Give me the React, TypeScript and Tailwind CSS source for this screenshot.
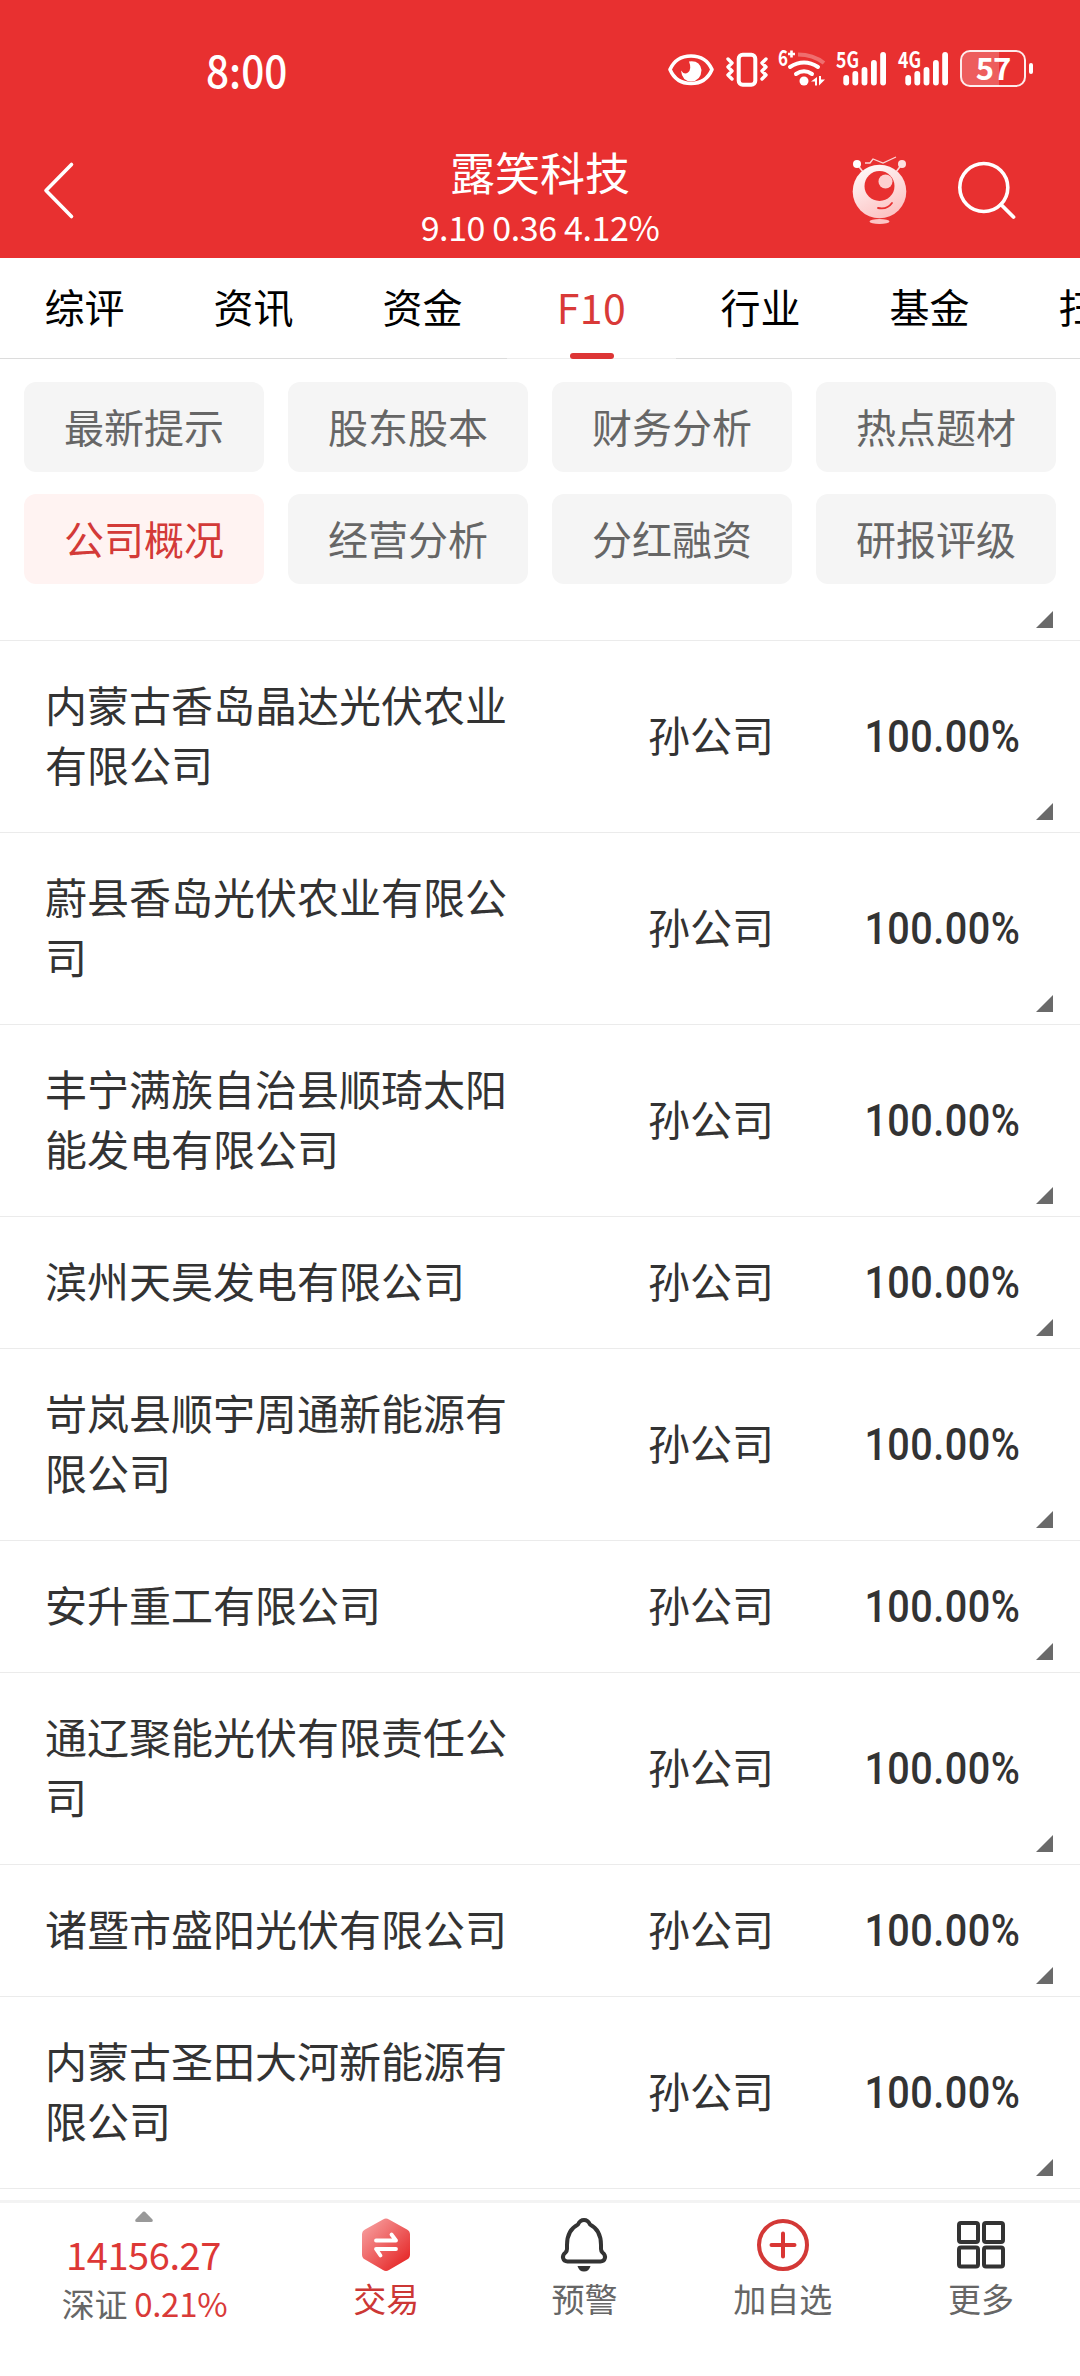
import type { ReactNode } from "react";

const tabs = ["综评", "资讯", "资金", "F10", "行业", "基金", "扫雷"];

const sections = [
  "最新提示",
  "股东股本",
  "财务分析",
  "热点题材",
  "公司概况",
  "经营分析",
  "分红融资",
  "研报评级",
];

const companies = [
  "内蒙古香岛晶达光伏农业有限公司",
  "蔚县香岛光伏农业有限公司",
  "丰宁满族自治县顺琦太阳能发电有限公司",
  "滨州天昊发电有限公司",
  "岢岚县顺宇周通新能源有限公司",
  "安升重工有限公司",
  "通辽聚能光伏有限责任公司",
  "诸暨市盛阳光伏有限公司",
  "内蒙古圣田大河新能源有限公司",
];

// Signal bars with the network type above them
function Signal({ label }: { label: string }) {
  return (
    <svg
      className="overflow-visible"
      width="52"
      height="40"
      viewBox="0 0 52 40"
      fill="white"
    >
      <text
        x="0"
        y="17.600"
        fontSize="22"
        fontWeight="700"
        textLength="23"
        lengthAdjust="spacingAndGlyphs"
      >
        {label}
      </text>
      <rect x="7.3" y="25" width="5.8" height="10.5" rx="2.9" />
      <rect x="16.4" y="21" width="5.8" height="14.5" rx="2.9" />
      <rect x="25.6" y="17" width="5.8" height="18.5" rx="2.9" />
      <rect x="35" y="10" width="5.8" height="25.5" rx="2.9" />
      <rect x="44.2" y="2" width="5.8" height="33.5" rx="2.9" />
    </svg>
  );
}

function StatusBar() {
  return (
    <div className="flex h-[136px] items-start pl-[206px] pr-[47px] pt-[50px]">
      <span className="-mt-px w-[90px] origin-left scale-x-[0.920] text-[44px] font-medium leading-[40px]">
        8:00
      </span>
      <svg
        className="ml-auto overflow-visible"
        width="160"
        height="40"
        viewBox="668 50 160 40"
        fill="none"
        stroke="white"
      >
        {/* eye */}
        <path
          d="M670 69.500Q676 56 691 56T712 69.500Q706 83.500 691 83.500T670 69.500Z"
          strokeWidth="3.600"
          strokeLinejoin="round"
        />
        <path
          d="M689 61.500Q700 60 701.500 70Q701 81 691 81.500Q682 81 681 70.500Q684 75 688 72.500Q692 69 689 61.500Z"
          fill="white"
          stroke="none"
        />
        {/* vibrate */}
        <rect x="738.700" y="54.700" width="16.600" height="30" rx="4" strokeWidth="4" />
        <path
          d="M728 59l4 4-4 4 4 4-4 4 4 4M766 59l-4 4 4 4-4 4 4 4-4 4"
          strokeWidth="3.400"
          strokeLinecap="round"
          strokeLinejoin="round"
        />
        {/* wifi */}
        <text
          x="778"
          y="66.300"
          fontSize="22"
          fontWeight="700"
          fill="white"
          stroke="none"
          textLength="10"
          lengthAdjust="spacingAndGlyphs"
        >
          6
        </text>
        <path d="M788 54h7M791.500 50.500v7" strokeWidth="2.600" />
        <path d="M798 54.500q15 0 26 8.500" strokeWidth="4" opacity=".3" />
        <path d="M790 67q14-9 28 0M796 74q8-5.500 16 0" strokeWidth="4" strokeLinecap="round" />
        <circle cx="804" cy="81" r="4.500" fill="white" stroke="none" />
        <path d="M811 81.500l6-4.500v8.500h-2v-4zM825 79.500l-6 6V76h2v3.500z" fill="white" stroke="none" />
      </svg>
      <div className="ml-2 flex gap-2.5">
        <Signal label="5G" />
        <Signal label="4G" />
      </div>
      <div className="ml-2.5 flex items-center">
        <div className="flex h-[37px] w-[66px] items-center justify-center rounded-[10px] border-[2.500px] border-white/90 bg-[linear-gradient(90deg,rgba(255,255,255,0.22)_60%,transparent_60%)] pb-[3px] text-[31px] font-bold leading-[30px] tracking-[-1px]">
          57
        </div>
        <div className="ml-[3px] h-[11px] w-1 rounded-full bg-white" />
      </div>
    </div>
  );
}

function Mascot() {
  return (
    <svg className="shrink-0" width="56" height="70" viewBox="852 156 56 70" fill="none">
      <defs>
        <linearGradient id="body" x1="0" y1="0" x2="0.500" y2="1">
          <stop offset="0" stopColor="#fff" />
          <stop offset="1" stopColor="#fcc5c5" />
        </linearGradient>
      </defs>
      <path d="M857 164l6 8M902 164l-6 8" stroke="#fbd5d5" strokeWidth="1.600" />
      <circle cx="857" cy="164" r="4" fill="#fff" />
      <circle cx="902" cy="164" r="4" fill="#fde0e0" />
      <path d="M865 163h5l3-4 10 4 13-6" stroke="#fbd5d5" strokeWidth="1.300" />
      <circle cx="879.500" cy="191.500" r="26.800" fill="url(#body)" />
      <circle cx="879.500" cy="186" r="15" fill="#e83030" />
      <circle cx="885.500" cy="181.500" r="7" fill="#fdd0d0" />
      <path d="M878 208q9 2 14-5" stroke="#e83030" strokeWidth="1.800" strokeLinecap="round" />
      <ellipse cx="879.500" cy="221.500" rx="10" ry="2.500" fill="#fcc5c5" />
    </svg>
  );
}

function Header() {
  return (
    <header className="h-[258px] shrink-0 bg-[#e83030] text-white">
      <StatusBar />
      <div className="flex h-[122px] items-start px-[42px]">
        <div className="w-[186px] shrink-0 pt-6">
          <svg width="34" height="60" viewBox="42 160 34 60" fill="none">
            <path
              d="M71.500 164.500L46 190.500L71.500 216.500"
              stroke="white"
              strokeWidth="3.600"
              strokeLinecap="round"
              strokeLinejoin="round"
            />
          </svg>
        </div>
        <div className="flex flex-1 flex-col items-center">
          <h1 className="mt-1.5 text-[45px] leading-[60px]">露笑科技</h1>
          <p className="mt-[5px] whitespace-nowrap text-[34px] leading-[40px] tracking-[-0.400px]">
            9.10 0.36 4.12%
          </p>
        </div>
        <div className="flex w-[186px] shrink-0 justify-end gap-[48px] pt-5 pr-[22px]">
          <Mascot />
          <svg
            className="mt-1 shrink-0"
            width="60"
            height="60"
            viewBox="956 160 60 60"
            fill="none"
          >
            <circle cx="983.800" cy="187.500" r="24" stroke="white" strokeWidth="3.600" />
            <path d="M1001 204.500l12.500 12.500" stroke="white" strokeWidth="3.800" strokeLinecap="round" />
          </svg>
        </div>
      </div>
    </header>
  );
}

function Tabs() {
  return (
    <nav className="flex h-[101px] shrink-0 overflow-hidden">
      {tabs.map((tab) => {
        const active = tab === "F10";
        return (
          <div
            key={tab}
            className={`relative flex w-[169px] shrink-0 items-center justify-center border-b pb-1 leading-none ${
              active
                ? "border-[#eeeeee] text-[41px] tracking-[0.500px] text-[#d93a38]"
                : "border-[#dcdcdc] text-[40px] text-black"
            }`}
          >
            {tab}
            {active && (
              <span className="absolute -bottom-px left-[63px] h-1.5 w-[44px] rounded-[3px] bg-[#dd3535]" />
            )}
          </div>
        );
      })}
    </nav>
  );
}

function Corner() {
  return (
    <svg
      className="absolute bottom-3 right-[27px]"
      width="17"
      height="17"
      viewBox="0 0 17 17"
    >
      <path d="M17 0v17H0z" fill="#6a6a6a" />
    </svg>
  );
}

function NavItem({ label, active, children }: { label: string; active?: boolean; children: ReactNode }) {
  return (
    <div className="flex flex-1 flex-col items-center pt-[13px]">
      {children}
      <span
        className={`mt-1.5 text-[33px] leading-[40px] ${active ? "text-[#cc3735]" : "text-[#666]"}`}
      >
        {label}
      </span>
    </div>
  );
}

function BottomBar() {
  return (
    <footer className="flex h-[176px] shrink-0 border-t-[3px] border-[#f3f3f3] bg-white">
      <div className="flex w-[287px] flex-col items-center pt-2">
        <svg width="18" height="11" viewBox="0 0 18 11">
          <path
            d="M8 .8Q9 0 10 .8L17.500 8.500Q18.500 11 16 11H2Q-.500 11 .500 8.500Z"
            fill="#999"
          />
        </svg>
        <span className="mt-[11px] text-[38px] leading-[42px] tracking-[-0.400px] text-[#dd3836]">
          14156.27
        </span>
        <span className="mt-[7px] whitespace-nowrap pl-0.5 text-[33px] leading-[42px] tracking-[-0.300px] text-[#666]">
          深证 <span className="text-[#d93a38]">0.21%</span>
        </span>
      </div>
      <NavItem label="交易" active>
        <svg width="56" height="56" viewBox="0 0 56 56" fill="none">
          <defs>
            <linearGradient id="hex" x1="0.100" y1="0.100" x2="0.850" y2="0.900">
              <stop offset="0" stopColor="#f69a9a" />
              <stop offset="1" stopColor="#e62b2b" />
            </linearGradient>
          </defs>
          <path
            d="M25 3.500Q28 1.500 31 3.500L49 13.500Q52 15 52 18.500V38.500Q52 42 49 43.500L31 54Q28 56 25 54L7 43.500Q4 42 4 38.500V18.500Q4 15 7 13.500Z"
            fill="url(#hex)"
          />
          <path
            d="M18 24.500H38L33.500 18.500M38 33H18L22.500 39.500"
            stroke="white"
            strokeWidth="3.800"
            strokeLinecap="round"
            strokeLinejoin="round"
          />
        </svg>
      </NavItem>
      <NavItem label="预警">
        <svg width="56" height="56" viewBox="0 0 56 56" fill="none">
          <path
            d="M22 8.500Q24 4 28 4T34 8.500Q45 14 45 29V33Q45 35 46.500 36.500C51 40 49 45.500 44.500 45.500H11.500C7 45.500 5 40 9.500 36.500Q11 35 11 33V29Q11 14 22 8.500Z"
            stroke="#333"
            strokeWidth="4"
            strokeLinejoin="round"
          />
          <path d="M21.500 50H34.500Q33 55.500 28 55.500T21.500 50Z" fill="#333" />
        </svg>
      </NavItem>
      <NavItem label="加自选">
        <svg width="56" height="56" viewBox="0 0 56 56" fill="none">
          <circle cx="28" cy="29" r="24" stroke="#d33836" strokeWidth="4" />
          <path d="M28 17.500V40.500M16.500 29H39.500" stroke="#d93634" strokeWidth="4" strokeLinecap="round" />
        </svg>
      </NavItem>
      <NavItem label="更多">
        <svg width="56" height="56" viewBox="0 0 56 56" fill="none" stroke="#333" strokeWidth="4">
          <rect x="6" y="7" width="19" height="19" rx="2" />
          <rect x="31" y="7" width="19" height="19" rx="2" />
          <rect x="6" y="31.500" width="19" height="19" rx="2" />
          <rect x="31" y="31.500" width="19" height="19" rx="2" />
        </svg>
      </NavItem>
    </footer>
  );
}

export default function App() {
  return (
    <div className="flex h-[2376px] w-[1080px] flex-col overflow-hidden bg-white font-['Noto_Sans_CJK_SC',sans-serif]">
      <Header />
      <Tabs />
      <div className="grid shrink-0 grid-cols-4 gap-x-6 gap-y-[22px] px-6 pt-[23px]">
        {sections.map((name) => (
          <div
            key={name}
            className={`flex h-[90px] items-center justify-center rounded-xl pb-[3px] text-[40px] leading-none ${
              name === "公司概况" ? "bg-[#fff3f2] text-[#d33a38]" : "bg-[#f5f5f5] text-[#666]"
            }`}
          >
            {name}
          </div>
        ))}
      </div>

      <main className="min-h-0 flex-1 overflow-hidden text-[42px] leading-[60px] text-[#333]">
        <div className="relative h-[57px] border-b border-[#ebebeb]">
          <Corner />
        </div>
        {companies.map((name) => (
          <div
            key={name}
            className="relative flex items-center border-b border-[#ebebeb] pb-[38px] pl-[45px] pt-[33px]"
          >
            <div className="w-[480px] break-all">{name}</div>
            <div className="ml-[123px] w-[130px]">孙公司</div>
            <div className="ml-auto mr-[60px] origin-right translate-y-1 scale-x-[0.910] font-['Roboto',sans-serif] text-[43.500px] font-medium tracking-[0.500px]">
              100.00%
            </div>
            <Corner />
          </div>
        ))}
      </main>
      <BottomBar />
    </div>
  );
}
